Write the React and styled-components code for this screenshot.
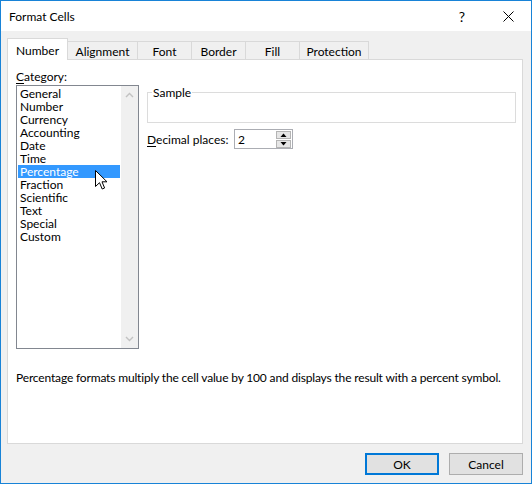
import React from 'react'
import styled, { createGlobalStyle } from 'styled-components'

const GlobalStyle = createGlobalStyle`
  html, body {
    margin: 0;
    padding: 0;
    background: #ffffff;
  }
  body {
    font-family: Lato, "Noto Sans", "Liberation Sans", sans-serif;
    font-size: 12px;
    color: #000;
  }
`

const categories = [
  'General', 'Number', 'Currency', 'Accounting', 'Date', 'Time',
  'Percentage', 'Fraction', 'Scientific', 'Text', 'Special', 'Custom',
]

const tabs = [
  { name: 'Number', width: 61 },
  { name: 'Alignment', width: 71 },
  { name: 'Font', width: 55 },
  { name: 'Border', width: 55 },
  { name: 'Fill', width: 55 },
  { name: 'Protection', width: 70 },
]

const Window = styled.div`
  position: relative;
  width: 532px;
  height: 484px;
  box-sizing: border-box;
  border: 1px solid #1883d7;
  display: flex;
  flex-direction: column;
  background: #f0f0f0;
  overflow: hidden;
`

const TitleBar = styled.div`
  height: 30px;
  flex-shrink: 0;
  background: #ffffff;
  display: flex;
  align-items: center;
  padding-left: 8px;
`

const Title = styled.span`
  flex: 1;
  font-size: 12px;
`

const TitleButton = styled.div`
  width: 46px;
  height: 30px;
  display: flex;
  align-items: center;
  justify-content: center;
  font-size: 14px;
`

const Body = styled.div`
  flex: 1;
  display: flex;
  flex-direction: column;
  padding: 7px 8px 8px 6px;
`

const TabStrip = styled.div`
  display: flex;
  align-items: flex-start;
  height: 21px;
  position: relative;
  z-index: 1;
`

const Tab = styled.div`
  box-sizing: border-box;
  width: ${p => p.$w}px;
  height: ${p => (p.$active ? 22 : 18)}px;
  margin-top: ${p => (p.$active ? 0 : 3)}px;
  margin-left: ${p => (p.$first ? 0 : -1)}px;
  border: 1px solid #d9d9d9;
  border-bottom: none;
  background: ${p => (p.$active ? '#ffffff' : '#f0f0f0')};
  display: flex;
  align-items: center;
  justify-content: center;
  padding-top: ${p => (p.$active ? 2 : 1)}px;
  position: relative;
  z-index: ${p => (p.$active ? 2 : 1)};
`

const Panel = styled.div`
  box-sizing: border-box;
  height: 385px;
  border: 1px solid #d9d9d9;
  background: #ffffff;
  padding: 9px 6px 0 8px;
  display: flex;
  flex-direction: column;
`

const ContentRow = styled.div`
  display: flex;
  gap: 8px;
`

const LeftColumn = styled.div`
  display: flex;
  flex-direction: column;
`

const FieldLabel = styled.div`
  height: 16px;
  line-height: 15px;
`

const Key = styled.span`
  text-decoration: underline;
  text-underline-offset: 2px;
`

const ListBox = styled.div`
  box-sizing: border-box;
  width: 123px;
  height: 264px;
  border: 1px solid #828790;
  display: flex;
`

const ListItems = styled.div`
  flex: 1;
  padding: 1px;
`

const ListItem = styled.div`
  height: 13px;
  line-height: 13px;
  padding-left: 2px;
  background: ${p => (p.$selected ? '#3399ff' : 'transparent')};
  color: ${p => (p.$selected ? '#ffffff' : '#000000')};
  white-space: nowrap;
  overflow: hidden;
`

const ScrollBar = styled.div`
  width: 17px;
  background: #f0f0f0;
  display: flex;
  flex-direction: column;
  justify-content: space-between;
  align-items: center;
  padding: 6px 0;
  box-sizing: border-box;
`

const RightColumn = styled.div`
  flex: 1;
  display: flex;
  flex-direction: column;
  padding-top: 16px;
`

const SampleBox = styled.fieldset`
  margin: 0;
  padding: 0;
  border: 1px solid #dcdcdc;
  min-inline-size: 0;
`

const SampleLegend = styled.legend`
  margin-left: 4px;
  padding: 0 1px;
  line-height: 15px;
`

const SampleValue = styled.div`
  height: 22px;
`

const DecimalRow = styled.div`
  display: flex;
  align-items: center;
  margin-top: 6px;
  height: 20px;
`

const DecimalLabel = styled.div`
  width: 87px;
`

const SpinBox = styled.div`
  box-sizing: border-box;
  width: 59px;
  height: 20px;
  border: 1px solid #abadb3;
  display: flex;
  align-items: center;
  justify-content: space-between;
  padding-left: 3px;
`

const SpinButtons = styled.div`
  display: flex;
  flex-direction: column;
  gap: 1px;
  margin-right: 1px;
`

const SpinButton = styled.div`
  box-sizing: border-box;
  width: 15px;
  height: 8px;
  background: #e6e6e6;
  border: 1px solid #b4b4b4;
  display: flex;
  align-items: center;
  justify-content: center;
`

const Description = styled.div`
  margin-top: 21px;
  line-height: 15px;
  letter-spacing: -0.16px;
  white-space: nowrap;
`

const ButtonRow = styled.div`
  display: flex;
  justify-content: flex-end;
  gap: 10px;
  margin-top: 9px;
`

const Button = styled.div`
  box-sizing: border-box;
  width: 74px;
  height: 22px;
  background: #e1e1e1;
  border: ${p => (p.$default ? '2px solid #0078d7' : '1px solid #adadad')};
  display: flex;
  align-items: center;
  justify-content: center;
`

const Cursor = styled.svg`
  position: absolute;
  left: 94px;
  top: 169px;
  z-index: 5;
`

const Chevron = ({ up }) => (
  <svg width="9" height="6" viewBox="0 0 9 6">
    <polyline
      points={up ? '1,5 4.5,1.5 8,5' : '1,1 4.5,4.5 8,1'}
      fill="none"
      stroke="#c2c2c2"
      strokeWidth="1.4"
    />
  </svg>
)

const Triangle = ({ up }) => (
  <svg width="7" height="4" viewBox="0 0 7 4">
    <polygon points={up ? '0.5,4 3.5,0.5 6.5,4' : '0.5,0 3.5,3.5 6.5,0'} fill="#000" />
  </svg>
)

export default function App() {
  return (
    <>
      <GlobalStyle />
      <Window>
        <TitleBar>
          <Title>Format Cells</Title>
          <TitleButton>?</TitleButton>
          <TitleButton>
            <svg width="11" height="11" viewBox="0 0 11 11">
              <path d="M0.5 0.5 L10.5 10.5 M10.5 0.5 L0.5 10.5" stroke="#000" strokeWidth="1" />
            </svg>
          </TitleButton>
        </TitleBar>

        <Body>
          <TabStrip>
            {tabs.map((t, i) => (
              <Tab key={t.name} $w={t.width} $active={i === 0} $first={i === 0}>
                {t.name}
              </Tab>
            ))}
          </TabStrip>

          <Panel>
            <ContentRow>
              <LeftColumn>
                <FieldLabel><Key>C</Key>ategory:</FieldLabel>
                <ListBox>
                  <ListItems>
                    {categories.map(c => (
                      <ListItem key={c} $selected={c === 'Percentage'}>{c}</ListItem>
                    ))}
                  </ListItems>
                  <ScrollBar>
                    <Chevron up />
                    <Chevron />
                  </ScrollBar>
                </ListBox>
              </LeftColumn>

              <RightColumn>
                <SampleBox>
                  <SampleLegend>Sample</SampleLegend>
                  <SampleValue />
                </SampleBox>
                <DecimalRow>
                  <DecimalLabel><Key>D</Key>ecimal places:</DecimalLabel>
                  <SpinBox>
                    <span>2</span>
                    <SpinButtons>
                      <SpinButton><Triangle up /></SpinButton>
                      <SpinButton><Triangle /></SpinButton>
                    </SpinButtons>
                  </SpinBox>
                </DecimalRow>
              </RightColumn>
            </ContentRow>

            <Description>
              Percentage formats multiply the cell value by 100 and displays the result with a percent symbol.
            </Description>
          </Panel>

          <ButtonRow>
            <Button $default>OK</Button>
            <Button>Cancel</Button>
          </ButtonRow>
        </Body>

        <Cursor width="13" height="21" viewBox="0 0 13 21">
          <path
            d="M0.5 0.5 L0.5 16.5 L4.5 12.7 L7.2 19 L9.6 18 L7 11.8 L12 11.8 Z"
            fill="#ffffff"
            stroke="#000000"
            strokeWidth="1"
            strokeLinejoin="miter"
          />
        </Cursor>
      </Window>
    </>
  )
}
